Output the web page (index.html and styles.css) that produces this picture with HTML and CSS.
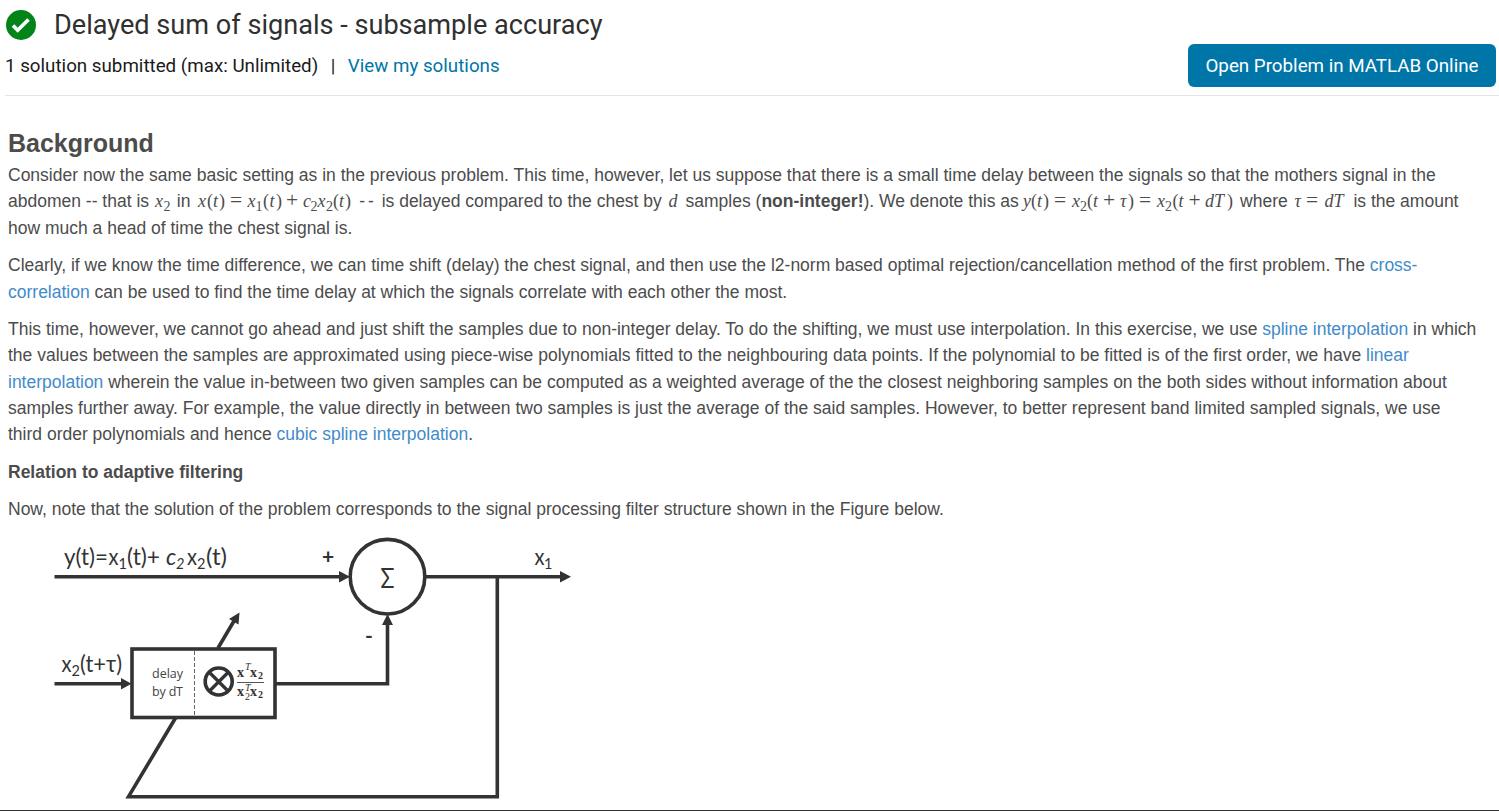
FILE: index.html
```html
<!DOCTYPE html>
<html lang="en">
<head>
<meta charset="utf-8">
<title>Delayed sum of signals - subsample accuracy</title>
<link rel="stylesheet" href="styles.css">
</head>
<body>
<header class="problem-header">
  <div class="title-row">
    <svg class="status" viewBox="0 0 30 30"><circle cx="15" cy="15" r="15" fill="#028418"/><path d="M7 15.500l4.700 4.700L22.500 9.500" fill="none" stroke="#fff" stroke-width="3.700"/></svg>
    <h1 class="title">Delayed sum of signals - subsample accuracy</h1>
  </div>
  <div class="meta-row">
    <p class="meta"><span class="count">1 solution submitted (max: Unlimited)</span><span class="divider">|</span><a class="view-link">View my solutions</a></p>
    <button class="open-button">Open Problem in MATLAB Online</button>
  </div>
</header>
<main class="content">
  <h2 class="section-title">Background</h2>
  <p class="para intro">Consider now the same basic setting as in the previous problem. This time, however, let us suppose that there is a small time delay between the signals so that the mothers signal in the<br>abdomen -- that is <svg class="math m-x2" height="16"><text y="16"><tspan x="1">x</tspan><tspan x="9.500" dy="3.500" class="sub">2</tspan></text></svg> in <svg class="math m-sum" height="16"><text y="16"><tspan x="3">x</tspan><tspan x="12" class="up">(</tspan><tspan x="18">t</tspan><tspan x="24" class="up">)</tspan><tspan x="35" class="up big">=</tspan><tspan x="52.500">x</tspan><tspan x="60.500" dy="3.500" class="sub">1</tspan><tspan x="68" dy="-3.500" class="up">(</tspan><tspan x="74.500">t</tspan><tspan x="81" class="up">)</tspan><tspan x="91" class="up big">+</tspan><tspan x="108">c</tspan><tspan x="115.500" dy="3.500" class="sub">2</tspan><tspan x="122.500" dy="-3.500">x</tspan><tspan x="131" dy="3.500" class="sub">2</tspan><tspan x="138" dy="-3.500" class="up">(</tspan><tspan x="144">t</tspan><tspan x="150" class="up">)</tspan></text></svg> <span class="dash">--</span> is delayed compared to the chest by <svg class="math m-d" height="16"><text y="16" x="1.500">d</text></svg> samples (<strong>non-integer!</strong>). We denote this as <svg class="math m-shift" height="16"><text y="16"><tspan x="-1">y</tspan><tspan x="7" class="up">(</tspan><tspan x="13">t</tspan><tspan x="19" class="up">)</tspan><tspan x="30" class="up big">=</tspan><tspan x="48">x</tspan><tspan x="56" dy="3.500" class="sub">2</tspan><tspan x="63" dy="-3.500" class="up">(</tspan><tspan x="69">t</tspan><tspan x="79" class="up big">+</tspan><tspan x="96">τ</tspan><tspan x="104" class="up">)</tspan><tspan x="115" class="up big">=</tspan><tspan x="133">x</tspan><tspan x="141" dy="3.500" class="sub">2</tspan><tspan x="148.500" dy="-3.500" class="up">(</tspan><tspan x="154.500">t</tspan><tspan x="164.500" class="up big">+</tspan><tspan x="181">dT</tspan><tspan x="203" class="up">)</tspan></text></svg> where <svg class="math m-tau" height="16"><text y="16"><tspan x="1.500">τ</tspan><tspan x="13" class="up big">=</tspan><tspan x="31.500">dT</tspan></text></svg> is the amount<br>how much a head of time the chest signal is.</p>
  <p class="para">Clearly, if we know the time difference, we can time shift (delay) the chest signal, and then use the l2-norm based optimal rejection/cancellation method of the first problem. The <a class="link">cross-<br>correlation</a> can be used to find the time delay at which the signals correlate with each other the most.</p>
  <p class="para">This time, however, we cannot go ahead and just shift the samples due to non-integer delay. To do the shifting, we must use interpolation. In this exercise, we use <a class="link">spline interpolation</a> in which<br>the values between the samples are approximated using piece-wise polynomials fitted to the neighbouring data points. If the polynomial to be fitted is of the first order, we have <a class="link">linear<br>interpolation</a> wherein the value in-between two given samples can be computed as a weighted average of the the closest neighboring samples on the both sides without information about<br>samples further away. For example, the value directly in between two samples is just the average of the said samples. However, to better represent band limited sampled signals, we use<br>third order polynomials and hence <a class="link">cubic spline interpolation</a>.</p>
  <p class="para"><strong>Relation to adaptive filtering</strong></p>
  <p class="para">Now, note that the solution of the problem corresponds to the signal processing filter structure shown in the Figure below.</p>
  <svg class="diagram" viewBox="40 530 550 275">
    <g class="wires">
      <path d="M54.500 576.700H342M425 576.700H562M54.500 683.700H122M276 683.700H387.500V623M497.300 577V796.700H128.500L175.500 718M218 648L234 621"/>
      <circle cx="387.500" cy="576.700" r="37.300"/>
      <rect x="132" y="649" width="143" height="68.500"/>
      <circle cx="218.700" cy="681.500" r="13.500"/>
      <path class="cross" d="M209.500 672.500l18.500 18.500M228 672.500l-18.500 18.500"/>
    </g>
    <path class="separator" d="M194.500 651V716"/>
    <g class="heads"><path d="M339 571l11 5.700-11 5.700zM560 571l11 5.700-11 5.700zM121 678l10.500 5.700-10.500 5.700zM382 625l5.500-11 5.500 11zM239.500 612.500l-1 12-9.500-5.500z"/></g>
    <g class="labels">
      <text x="64" y="564.500" textLength="44" lengthAdjust="spacingAndGlyphs">y(t)=</text><text x="108.500" y="564.500" textLength="10" lengthAdjust="spacingAndGlyphs">x</text><text class="low" x="118.500" y="568.500">1</text><text x="127" y="564.500" textLength="33" lengthAdjust="spacingAndGlyphs">(t)+</text><text class="slant" x="166" y="564.500">c</text><text class="low slant" x="176" y="568.500">2</text><text x="187" y="564.500" textLength="10" lengthAdjust="spacingAndGlyphs">x</text><text class="low" x="197" y="568.500">2</text><text x="206" y="564.500" textLength="21" lengthAdjust="spacingAndGlyphs">(t)</text>
      <text x="61.500" y="671.500" textLength="10" lengthAdjust="spacingAndGlyphs">x</text><text class="low" x="71.500" y="675.500">2</text><text x="80" y="671.500" textLength="42" lengthAdjust="spacingAndGlyphs">(t+τ)</text>
      <text x="534.500" y="564.500" textLength="10" lengthAdjust="spacingAndGlyphs">x</text><text class="low" x="544" y="568.500">1</text>
      <text class="sign" x="322" y="564">+</text><text class="sign" x="365" y="642.500">-</text><text class="sigma" x="380.500" y="587.500" textLength="14" lengthAdjust="spacingAndGlyphs">Σ</text>
    </g>
    <g class="small"><text x="152" y="678" textLength="31">delay</text><text x="152" y="696" textLength="31">by dT</text></g>
    <g class="fraction"><text x="237" y="677">x</text><text class="exp" x="245" y="670">T</text><text x="250" y="677">x</text><text class="idx" x="258" y="679">2</text><path d="M237 682.500H264"/><text x="237" y="696">x</text><text class="exp" x="245" y="691">T</text><text class="idx thin" x="245" y="700">2</text><text x="250" y="696">x</text><text class="idx" x="258" y="698">2</text></g>
  </svg>
</main>
</body>
</html>
```
FILE: styles.css
```css
* { box-sizing: border-box; }
body { margin: 0; height: 811px; overflow: hidden; background: #fff; color: #4c4c4c; font-family: "Liberation Sans", Arial, sans-serif; border-bottom: 1px solid #333; }
h1, h2, p { margin: 0; font-weight: 400; }
.problem-header { height: 96px; margin-left: 5px; border-bottom: 1px solid #e4e4e4; font-family: Roboto, sans-serif; }
.title-row { display: flex; align-items: center; gap: 18px; height: 44px; padding: 5px 0 0 1px; }
.status { width: 30px; height: 30px; }
.title { color: #303030; font-size: 27.120px; line-height: 40px; }
.meta-row { display: flex; justify-content: space-between; height: 43px; padding-right: 3px; align-items: center; }
.meta { color: #1a1a1a; font-size: 18.750px; }
.divider { margin: 0 12.500px; }
.view-link { color: #0076a8; }
.open-button { width: 308px; height: 43px; padding: 0; border: 0; border-radius: 6px; background: #0076a8; color: #fff; font: 18.750px Roboto, sans-serif; }
.content { padding: 32px 0 0 8px; white-space: nowrap; }
.section-title { font-size: 25px; font-weight: 700; line-height: 30px; margin-bottom: 4px; }
.para { font-size: 17.500px; line-height: 26.250px; margin-bottom: 11.250px; }
.para.intro { margin-bottom: 11.550px; }
.link { color: #428bca; }
.math { overflow: visible; fill: #4c4c4c; font: italic 18px "Liberation Serif", serif; }
.up { font-style: normal; }
.sub { font-style: normal; font-size: 14px; }
.big { font-size: 21.500px; }
.m-x2 { width: 18px; }
.m-sum { width: 159px; }
.m-d { width: 14px; }
.m-shift { width: 211.500px; }
.m-tau { width: 56px; }
.dash { letter-spacing: 3px; }
.diagram { display: block; width: 550px; height: 275px; margin: -3.300px 0 0 32px; }
.wires { fill: none; stroke: #333; stroke-width: 3.600; }
.cross { stroke-width: 3.200; }
.separator { stroke: #666; stroke-width: 1; stroke-dasharray: 4 2; }
.heads { fill: #333; }
.labels { fill: #333; font: 22.500px Lato, sans-serif; }
.low { font-size: 14.500px; }
.slant { font-style: italic; }
.sign { font-size: 21px; font-weight: 700; }
.sigma { font-size: 27px; }
.small { fill: #444; font: 12.500px "Open Sans", sans-serif; }
.fraction { fill: #333; stroke: none; font: bold 14px "Liberation Serif", serif; }
.fraction path { stroke: #555; stroke-width: 1; }
.exp { font: italic 10px "Liberation Serif", serif; }
.idx { font-size: 10px; }
.thin { font-weight: 400; }
```
